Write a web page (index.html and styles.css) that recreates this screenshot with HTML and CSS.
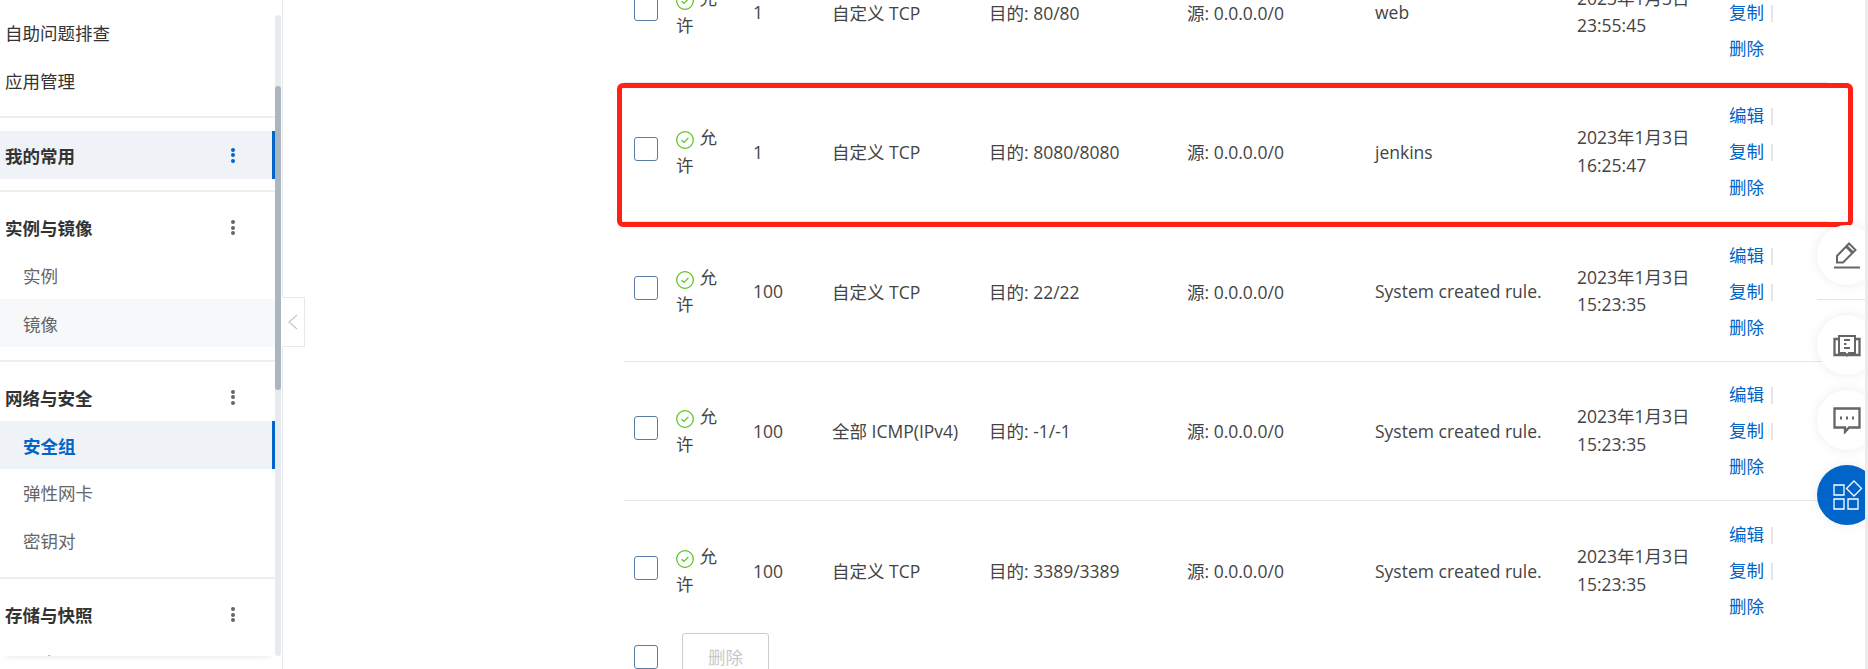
FILE: index.html
```html
<!DOCTYPE html>
<html lang="zh-CN">
<head>
    <meta charset="UTF-8">
    <title>安全组规则</title>
    <link rel="stylesheet" href="styles.css">
</head>
<body>
    <aside class="sidebar">
        <nav class="nav">
            <a class="nav-item nav-top">自助问题排查</a>
            <a class="nav-item nav-top">应用管理</a>
            <div class="nav-group nav-group-first">
                <div class="nav-title is-active"><b>我的常用</b><span class="dots"><i></i><i></i><i></i></span></div>
            </div>
            <div class="nav-group">
                <div class="nav-title"><b>实例与镜像</b><span class="dots"><i></i><i></i><i></i></span></div>
                <a class="nav-item nav-sub">实例</a>
                <a class="nav-item nav-sub is-hover">镜像</a>
            </div>
            <div class="nav-group">
                <div class="nav-title"><b>网络与安全</b><span class="dots"><i></i><i></i><i></i></span></div>
                <a class="nav-item nav-sub is-active">安全组</a>
                <a class="nav-item nav-sub">弹性网卡</a>
                <a class="nav-item nav-sub">密钥对</a>
            </div>
            <div class="nav-group">
                <div class="nav-title"><b>存储与快照</b><span class="dots"><i></i><i></i><i></i></span></div>
                <a class="nav-item nav-sub">云盘</a>
            </div>
        </nav>
        <div class="scrollbar"><div class="scrollbar-thumb"></div></div>
    </aside>
    <div class="collapse-handle">
        <svg width="12" height="16" viewBox="0 0 12 16"><path d="M10 1 2 8l8 7" fill="none" stroke="#c4c8cd" stroke-width="1.2"/></svg>
    </div>

    <main class="content">
        <div class="rules">
            <div class="rule rule-short">
                <span class="checkbox"></span>
                <span class="allow"><svg class="ok" viewBox="0 0 18 18"><circle cx="9" cy="9" r="8.300" fill="none" stroke="#52c41a" stroke-width="1.2"/><path d="m5.600 9.200 2.400 2.300 4.400-4.600" fill="none" stroke="#52c41a" stroke-width="1.2"/></svg> 允许</span>
                <span>1</span>
                <span>自定义 TCP</span>
                <span>目的: 80/80</span>
                <span>源: 0.0.0.0/0</span>
                <span>web</span>
                <span class="time">2023年1月3日<br>23:55:45</span>
                <span class="actions"><a>编辑</a><a>复制</a><a>删除</a></span>
            </div>
            <div class="rule rule-short">
                <span class="checkbox"></span>
                <span class="allow"><svg class="ok" viewBox="0 0 18 18"><circle cx="9" cy="9" r="8.300" fill="none" stroke="#52c41a" stroke-width="1.2"/><path d="m5.600 9.200 2.400 2.300 4.400-4.600" fill="none" stroke="#52c41a" stroke-width="1.2"/></svg> 允许</span>
                <span>1</span>
                <span>自定义 TCP</span>
                <span>目的: 8080/8080</span>
                <span>源: 0.0.0.0/0</span>
                <span>jenkins</span>
                <span class="time">2023年1月3日<br>16:25:47</span>
                <span class="actions"><a>编辑</a><a>复制</a><a>删除</a></span>
            </div>
            <div class="rule">
                <span class="checkbox"></span>
                <span class="allow"><svg class="ok" viewBox="0 0 18 18"><circle cx="9" cy="9" r="8.300" fill="none" stroke="#52c41a" stroke-width="1.2"/><path d="m5.600 9.200 2.400 2.300 4.400-4.600" fill="none" stroke="#52c41a" stroke-width="1.2"/></svg> 允许</span>
                <span>100</span>
                <span>自定义 TCP</span>
                <span>目的: 22/22</span>
                <span>源: 0.0.0.0/0</span>
                <span>System created rule.</span>
                <span class="time">2023年1月3日<br>15:23:35</span>
                <span class="actions"><a>编辑</a><a>复制</a><a>删除</a></span>
            </div>
            <div class="rule">
                <span class="checkbox"></span>
                <span class="allow"><svg class="ok" viewBox="0 0 18 18"><circle cx="9" cy="9" r="8.300" fill="none" stroke="#52c41a" stroke-width="1.2"/><path d="m5.600 9.200 2.400 2.300 4.400-4.600" fill="none" stroke="#52c41a" stroke-width="1.2"/></svg> 允许</span>
                <span>100</span>
                <span>全部 ICMP(IPv4)</span>
                <span>目的: -1/-1</span>
                <span>源: 0.0.0.0/0</span>
                <span>System created rule.</span>
                <span class="time">2023年1月3日<br>15:23:35</span>
                <span class="actions"><a>编辑</a><a>复制</a><a>删除</a></span>
            </div>
            <div class="rule rule-last">
                <span class="checkbox"></span>
                <span class="allow"><svg class="ok" viewBox="0 0 18 18"><circle cx="9" cy="9" r="8.300" fill="none" stroke="#52c41a" stroke-width="1.2"/><path d="m5.600 9.200 2.400 2.300 4.400-4.600" fill="none" stroke="#52c41a" stroke-width="1.2"/></svg> 允许</span>
                <span>100</span>
                <span>自定义 TCP</span>
                <span>目的: 3389/3389</span>
                <span>源: 0.0.0.0/0</span>
                <span>System created rule.</span>
                <span class="time">2023年1月3日<br>15:23:35</span>
                <span class="actions"><a>编辑</a><a>复制</a><a>删除</a></span>
            </div>
        </div>
        <div class="table-foot">
            <span class="checkbox"></span>
            <button class="btn-disabled">删除</button>
        </div>
    </main>

    <div class="highlight"></div>
    <div class="stray-line"></div>

    <div class="float-btns">
        <div class="float-btn float-btn-edit">
            <svg width="28" height="28" viewBox="0 0 28 28" fill="none" stroke="#666" stroke-width="2"><path d="M4 20.500v-5.500L16 2.500l6.500 6.500L10 21.500H4z"/><path d="m13.500 5.500 6.500 6.500" stroke-width="3"/><path d="M1 26.500h26"/></svg>
        </div>
        <div class="float-btn">
            <svg width="28" height="28" viewBox="0 0 28 28" fill="none" stroke="#666" stroke-width="2"><path d="M6 5v17h6l2 2.500 2-2.500h6V5H6z"/><path d="M6 8H1.500v16h25V8H22" stroke-width="2.300"/><path d="M11 9h6M11 13h2.500M11 17h6"/></svg>
        </div>
        <div class="float-btn">
            <svg width="28" height="28" viewBox="0 0 28 28" fill="none" stroke="#666" stroke-width="2.300"><path d="M1.500 2.500h25v19H16l-4 4.500v-4.500H1.500z"/><path d="M7 12h2M13 12h2M19 12h2" stroke-width="3"/></svg>
        </div>
        <div class="float-btn float-btn-primary">
            <svg width="30" height="30" viewBox="0 0 30 30" fill="none" stroke="#fff" stroke-width="1.300"><path d="M1 5h10v10H1zM1 19h10v10H1zM15 19h10v10H15zM21 1l7.500 7.500L21 16l-7.500-7.500z"/></svg>
        </div>
    </div>

    <div class="page-scrollbar"></div>
</body>
</html>
```

FILE: styles.css
```css
* {
    box-sizing: border-box;
}
html, body {
    height: 100%;
    margin: 0;
    overflow: hidden;
}
body {
    display: flex;
    align-items: flex-start;
    position: relative;
    background-color: #fff;
    font-family: "Open Sans", "Noto Sans CJK SC", sans-serif;
    font-size: 17.5px;
    color: #333;
}

/* left menu */
.sidebar {
    flex: 0 0 283px;
    height: 669px;
    display: flex;
    align-items: flex-start;
    padding-top: 9px;
    border-right: 1px solid #e6e8eb;
}
.nav {
    flex: 0 0 275px;
    height: 647px;
    overflow: hidden;
    box-shadow: 0 4px 8px -6px rgba(0, 0, 0, .2);
}
.nav-item, .nav-title {
    display: flex;
    align-items: center;
    justify-content: space-between;
    height: 47.700px;
}
.nav-top {
    padding-left: 5px;
}
.nav-title {
    padding: 0 40px 0 5px;
}
.nav-title b {
    font-weight: 700;
}
.nav-sub {
    padding-left: 23px;
    color: #666;
}
.nav-group {
    border-top: 2px solid #eceef0;
    padding: 12px 0 12.500px;
}
.nav-group-first {
    margin-top: 12px;
    padding: 13px 0 11px;
}
.is-active {
    background-color: #eff2f7;
    box-shadow: inset -3px 0 0 #0064c8;
}
.nav-sub.is-active {
    color: #0064c8;
    font-weight: 700;
}
.is-hover {
    background-color: #f7f8fa;
}
.dots {
    display: flex;
    flex-direction: column;
    gap: 1.500px;
}
.dots i {
    width: 4px;
    height: 4px;
    border-radius: 50%;
    background-color: #666;
}
.is-active .dots i {
    background-color: #0064c8;
}
.scrollbar {
    flex: 0 0 6px;
    height: 641px;
    margin-top: 6px;
    background-color: #e8ebee;
    border-radius: 3px;
    padding-top: 71px;
}
.scrollbar-thumb {
    height: 304px;
    background-color: #abb5c0;
    border-radius: 3px;
}
.collapse-handle {
    position: absolute;
    left: 282px;
    top: 297px;
    width: 23px;
    height: 50px;
    display: flex;
    align-items: center;
    justify-content: center;
    background-color: #fff;
    border: 1px solid #e6e8eb;
    border-left: 0;
}

/* rules table */
.content {
    flex: 0 0 1240px;
    margin: -57px 0 0 341px;
}
.rule {
    display: grid;
    grid-template-columns: 42px 77px 79px 157px 198px 188px 202px 152px 1fr;
    align-items: center;
    height: 139.500px;
    padding-left: 10px;
    border-bottom: 1px solid #e3e5e8;
    color: #444;
}
.rule-short {
    width: 1204px;
}
.rule-last {
    border-bottom: 0;
}
.checkbox {
    display: block;
    width: 24px;
    height: 24px;
    background-color: #fff;
    border: 1px solid #5a7da5;
    border-radius: 3px;
}
.rule .checkbox {
    margin-top: -6px;
}
.allow {
    width: 50px;
    line-height: 27.500px;
}
.ok {
    width: 18px;
    height: 18px;
    vertical-align: -5px;
    margin-right: 1px;
}
.time {
    line-height: 27.500px;
}
.actions {
    display: flex;
    flex-direction: column;
    gap: 11.500px;
    margin-top: -1px;
}
.actions a {
    display: block;
    line-height: 24.500px;
    color: #0064c8;
}
.actions a:not(:last-child)::after {
    content: "";
    display: inline-block;
    width: 2px;
    height: 17px;
    margin-left: 7px;
    vertical-align: -3px;
    background-color: #e3e5e8;
}
.table-foot {
    display: flex;
    align-items: flex-start;
    gap: 24px;
    padding-left: 10px;
    margin-top: -8px;
}
.table-foot .checkbox {
    margin-top: 12px;
}
.btn-disabled {
    width: 87px;
    height: 48px;
    font: inherit;
    color: #c9c9c9;
    background-color: #fff;
    border: 1px solid #c9ccd0;
    border-radius: 3px;
}

/* red marker drawn over the screenshot */
.highlight {
    position: absolute;
    left: 617px;
    top: 83px;
    width: 1236px;
    height: 144px;
    border: 5px solid #ff2116;
    border-radius: 6px;
}
.stray-line {
    position: absolute;
    left: 1817px;
    top: 299px;
    width: 48px;
    height: 1px;
    background-color: #e3e5e8;
}

/* floating help buttons */
.float-btns {
    position: absolute;
    left: 1817px;
    top: 225px;
    display: flex;
    flex-direction: column;
    gap: 15px;
}
.float-btn {
    width: 60px;
    height: 60px;
    display: flex;
    align-items: center;
    justify-content: flex-start;
    padding-left: 16px;
    background-color: #fff;
    border-radius: 50%;
    box-shadow: 0 0 12px rgba(0, 0, 0, .08);
}
.float-btn-edit {
    margin-bottom: 15px;
}
.float-btn-primary {
    background-color: #0064c8;
}
.page-scrollbar {
    position: absolute;
    right: 0;
    top: 0;
    width: 3px;
    height: 100%;
    background-color: #ececec;
}
```
